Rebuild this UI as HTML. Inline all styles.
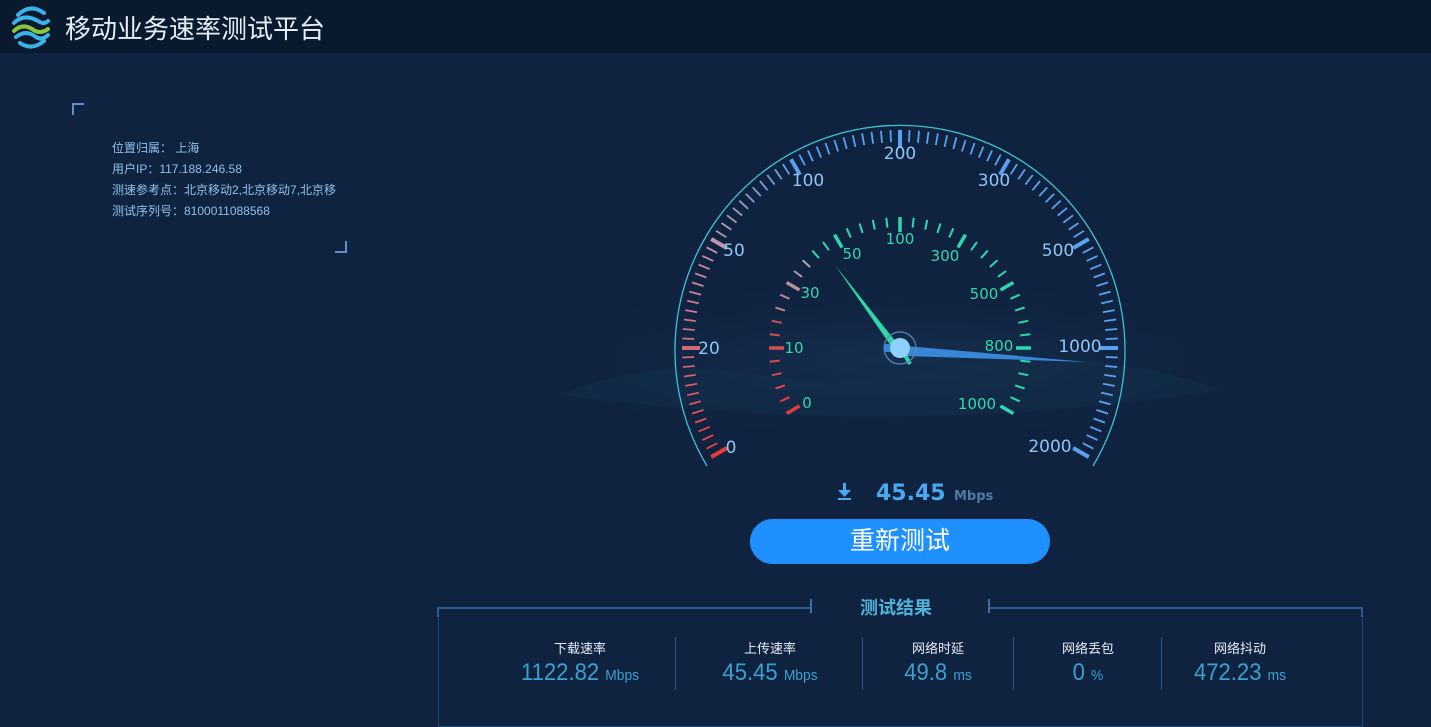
<!DOCTYPE html>
<html><head><meta charset="utf-8">
<style>
*{margin:0;padding:0;box-sizing:border-box}
body{width:1431px;height:716px;overflow:hidden;background:#0f2340;font-family:"Liberation Sans","Noto Sans CJK SC",sans-serif;position:relative}
.hdr{position:absolute;left:0;top:0;width:1431px;height:53px;background:#0a1a2e}
.title{position:absolute;left:65px;top:9px;font-size:26px;color:#e6eef8;letter-spacing:0}
.info{position:absolute;left:112px;top:138px;font-size:12px;color:#8fc0ea;line-height:21px}
.c{position:absolute;width:12px;height:12px;border-color:#5b8fd0;border-style:solid}
.btn{position:absolute;left:750px;top:519px;width:300px;height:45px;border-radius:23px;background:#1e90ff;color:#fff;font-size:25px;text-align:center;line-height:45px}
.res{position:absolute;left:438px;top:607px;width:925px;height:120px;border:1px solid #1f4470;border-top:none}
.rt{position:absolute;left:860px;top:594px;font-size:18px;font-weight:bold;color:#4fb3d9}
.col{position:absolute;top:638px;text-align:center}
.col .l{font-size:13px;color:#e8eef6}
.col .v{font-size:24px;color:#3ba0cf;margin-top:2px;transform:scaleX(.92)}
.col .v span{font-size:15px}
.sep{position:absolute;top:637px;width:1px;height:53px;background:#2c5584}
</style></head><body>
<div class="hdr"></div>
<svg style="position:absolute;left:10px;top:5px" width="42" height="44" viewBox="0 0 42 44">
<g fill="none" stroke-linecap="round">
<path d="M8 10 Q20 -2 34 8" stroke="#3ab3e8" stroke-width="4"/>
<path d="M4 18 Q14 8 28 16 Q34 20 38 16" stroke="#3ab3e8" stroke-width="4"/>
<path d="M4 26 Q12 18 22 24 Q30 30 38 24" stroke="#8cc63f" stroke-width="4"/>
<path d="M6 32 Q16 24 26 32 Q32 36 38 30" stroke="#3ab3e8" stroke-width="4"/>
<path d="M10 38 Q22 46 34 36" stroke="#3ab3e8" stroke-width="4"/>
</g></svg>
<div class="title">移动业务速率测试平台</div>
<div class="c" style="left:72px;top:103px;border-width:2px 0 0 2px"></div>
<div class="c" style="left:335px;top:241px;border-width:0 2px 2px 0"></div>
<div class="info">位置归属：&nbsp;上海<br>用户IP：117.188.246.58<br>测速参考点：北京移动2,北京移动7,北京移<br>测试序列号：8100011088568</div>

<svg id="g" style="position:absolute;left:0;top:0" width="1431" height="716">
<defs><radialGradient id="fog" cx="50%" cy="50%" r="50%"><stop offset="0" stop-color="#1a3658" stop-opacity=".6"/><stop offset="1" stop-color="#0f2340" stop-opacity="0"/></radialGradient></defs>
<ellipse cx="900" cy="360" rx="450" ry="90" fill="url(#fog)"/>
<path d="M560 395 Q640 360 740 372 Q850 392 960 365 Q1100 345 1220 390 Q900 440 560 395Z" fill="#15304d" opacity=".45"/>
<path d="M707 466 A225 225 0 1 1 1093 466" fill="none" stroke="#3fc2d3" stroke-width="1.3"/>
<g id="ticks"></g>
<g font-family="'DejaVu Sans',sans-serif" font-size="17" fill="#8ec5f5" text-anchor="middle">
<text x="731" y="453">0</text><text x="709" y="354">20</text><text x="734" y="256">50</text><text x="808" y="186">100</text><text x="900" y="159">200</text><text x="994" y="186">300</text><text x="1058" y="256">500</text><text x="1080" y="352">1000</text><text x="1050" y="452">2000</text>
</g>
<g font-family="'DejaVu Sans',sans-serif" font-size="15" fill="#35d6b0" text-anchor="middle">
<text x="807" y="408">0</text><text x="794" y="353">10</text><text x="810" y="298">30</text><text x="852" y="259">50</text><text x="900" y="244">100</text><text x="945" y="261">300</text><text x="984" y="299">500</text><text x="999" y="351">800</text><text x="977" y="409">1000</text>
</g>
<polygon points="1087,362 906,346 906,356" fill="#3a86d6"/>
<polygon points="835,265 904,352 898,356" fill="#2ed6a8"/>
<line x1="905" y1="355" x2="910" y2="364" stroke="#2ed6a8" stroke-width="4"/>
<circle cx="900" cy="348" r="16" fill="none" stroke="#5a86b8" stroke-width="1.2"/>
<rect x="884" y="344" width="16" height="8" fill="#3a86d6"/>
<circle cx="900" cy="348" r="10" fill="#8fd0ff"/>
<g fill="#4aa8f0"><rect x="843" y="483" width="3" height="10"/><polygon points="838,490 851,490 844.5,497"/><rect x="838" y="498" width="13" height="2"/></g>
<text x="876" y="500" font-family="'DejaVu Sans',sans-serif" font-weight="bold" font-size="22" fill="#4aa8f0">45.45</text>
<text x="954" y="500" font-family="'DejaVu Sans',sans-serif" font-weight="bold" font-size="13" fill="#4e7aa6">Mbps</text>
</svg>
<div class="btn">重新测试</div>

<div class="res"></div>
<svg style="position:absolute;left:430px;top:595px" width="940" height="30">
<path d="M8 22 V13 H380" stroke="#2a5a90" stroke-width="2" fill="none"/>
<path d="M932 22 V13 H560" stroke="#2a5a90" stroke-width="2" fill="none"/>
<line x1="381" y1="4" x2="381" y2="18" stroke="#3a6fa8" stroke-width="2"/>
<line x1="559" y1="4" x2="559" y2="18" stroke="#3a6fa8" stroke-width="2"/>
</svg>
<div class="rt">测试结果</div>
<div class="col" style="left:500px;width:160px"><div class="l">下载速率</div><div class="v">1122.82 <span>Mbps</span></div></div>
<div class="sep" style="left:675px"></div>
<div class="col" style="left:690px;width:160px"><div class="l">上传速率</div><div class="v">45.45 <span>Mbps</span></div></div>
<div class="sep" style="left:862px"></div>
<div class="col" style="left:868px;width:140px"><div class="l">网络时延</div><div class="v">49.8 <span>ms</span></div></div>
<div class="sep" style="left:1013px"></div>
<div class="col" style="left:1018px;width:140px"><div class="l">网络丢包</div><div class="v">0 <span>%</span></div></div>
<div class="sep" style="left:1161px"></div>
<div class="col" style="left:1160px;width:160px"><div class="l">网络抖动</div><div class="v">472.23 <span>ms</span></div></div>

<script>
(function(){
var g=document.getElementById('ticks'),cx=900,cy=348,s='';
function mix(a,b,t){return 'rgb('+[0,1,2].map(function(i){return Math.round(a[i]+(b[i]-a[i])*t)}).join(',')+')';}
function tk(r1,r2,deg,col,w){var a=(deg-90)*Math.PI/180,c=Math.cos(a),sn=Math.sin(a);
s+='<line x1="'+(cx+r1*c).toFixed(1)+'" y1="'+(cy+r1*sn).toFixed(1)+'" x2="'+(cx+r2*c).toFixed(1)+'" y2="'+(cy+r2*sn).toFixed(1)+'" stroke="'+col+'" stroke-width="'+w+'"/>';}
var red=[230,60,60],pink=[190,150,175],blue=[90,160,240];
for(var i=0;i<=96;i++){var d=-120+i*2.5,maj=i%12==0,col;
 if(d<-60)col=mix(red,pink,(d+120)/60);else if(d<-30)col=mix(pink,blue,(d+60)/30);else col=mix(blue,blue,0);
 tk(maj?200:206,218,d,col,maj?4:1.8);}
var teal=[45,215,175],grey=[160,170,180];
for(var j=0;j<=40;j++){var e=-120+j*6,mj=j%5==0,cl;
 if(e<-75)cl=mix(red,[200,90,90],(e+120)/45);else if(e<-45)cl=mix([200,120,120],grey,(e+75)/30);else cl=mix(teal,teal,0);
 tk(mj?116:121,131,e,cl,mj?3.5:2);}
g.innerHTML=s;
})();
</script>
</body></html>
